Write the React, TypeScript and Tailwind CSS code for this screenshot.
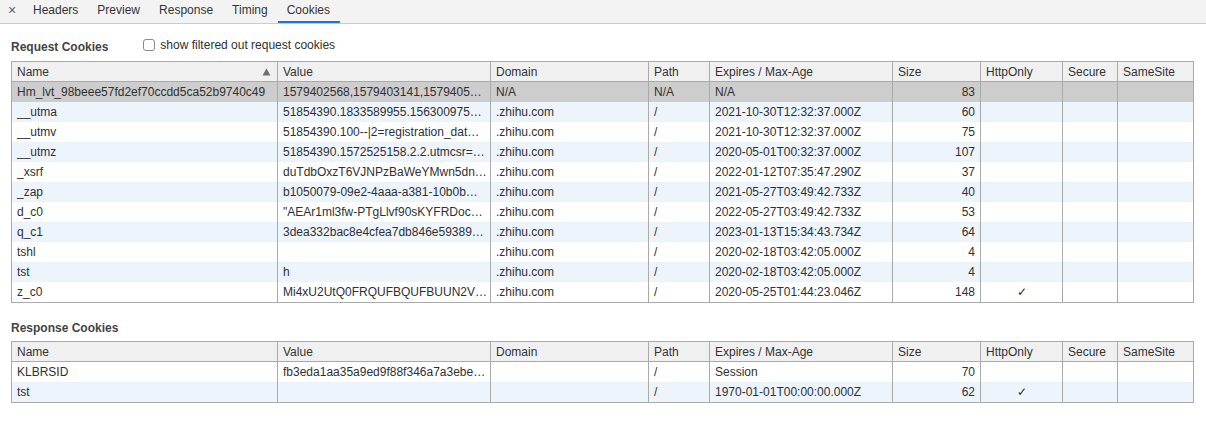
import React from 'react';

const cols = 'grid grid-cols-[265px_213px_158px_61px_183px_88px_82px_55px_76px]';

const headers = ['Name', 'Value', 'Domain', 'Path', 'Expires / Max-Age', 'Size', 'HttpOnly', 'Secure', 'SameSite'];

type Cookie = {
    name: string;
    value: string;
    domain: string;
    path: string;
    expires: string;
    size: number;
    httpOnly?: boolean;
};

const requestCookies: Cookie[] = [
    { name: 'Hm_lvt_98beee57fd2ef70ccdd5ca52b9740c49', value: '1579402568,1579403141,1579405…', domain: 'N/A', path: 'N/A', expires: 'N/A', size: 83 },
    { name: '__utma', value: '51854390.1833589955.156300975…', domain: '.zhihu.com', path: '/', expires: '2021-10-30T12:32:37.000Z', size: 60 },
    { name: '__utmv', value: '51854390.100--|2=registration_dat…', domain: '.zhihu.com', path: '/', expires: '2021-10-30T12:32:37.000Z', size: 75 },
    { name: '__utmz', value: '51854390.1572525158.2.2.utmcsr=…', domain: '.zhihu.com', path: '/', expires: '2020-05-01T00:32:37.000Z', size: 107 },
    { name: '_xsrf', value: 'duTdbOxzT6VJNPzBaWeYMwn5dn…', domain: '.zhihu.com', path: '/', expires: '2022-01-12T07:35:47.290Z', size: 37 },
    { name: '_zap', value: 'b1050079-09e2-4aaa-a381-10b0b…', domain: '.zhihu.com', path: '/', expires: '2021-05-27T03:49:42.733Z', size: 40 },
    { name: 'd_c0', value: '"AEAr1ml3fw-PTgLlvf90sKYFRDoc…', domain: '.zhihu.com', path: '/', expires: '2022-05-27T03:49:42.733Z', size: 53 },
    { name: 'q_c1', value: '3dea332bac8e4cfea7db846e59389…', domain: '.zhihu.com', path: '/', expires: '2023-01-13T15:34:43.734Z', size: 64 },
    { name: 'tshl', value: '', domain: '.zhihu.com', path: '/', expires: '2020-02-18T03:42:05.000Z', size: 4 },
    { name: 'tst', value: 'h', domain: '.zhihu.com', path: '/', expires: '2020-02-18T03:42:05.000Z', size: 4 },
    { name: 'z_c0', value: 'Mi4xU2UtQ0FRQUFBQUFBUUN2V…', domain: '.zhihu.com', path: '/', expires: '2020-05-25T01:44:23.046Z', size: 148, httpOnly: true },
];

const responseCookies: Cookie[] = [
    { name: 'KLBRSID', value: 'fb3eda1aa35a9ed9f88f346a7a3ebe…', domain: '', path: '/', expires: 'Session', size: 70 },
    { name: 'tst', value: '', domain: '', path: '/', expires: '1970-01-01T00:00:00.000Z', size: 62, httpOnly: true },
];

const tabs = ['Headers', 'Preview', 'Response', 'Timing', 'Cookies'];

function Cell({ children, className = '' }: { children?: React.ReactNode; className?: string }) {
    return (
        <div className={`px-[5px] overflow-hidden whitespace-nowrap leading-[20px] border-l border-[#aaaaaa] first:border-l-0 ${className}`}>
            {children}
        </div>
    );
}

function CookieTable({ rows, sorted, selectedFirst }: { rows: Cookie[]; sorted?: boolean; selectedFirst?: boolean }) {
    return (
        <div className="w-[1183px] border border-[#aaaaaa]">
            <div className={`${cols} h-[20px] bg-[#f0f0f0] border-b border-[#aaaaaa] text-[#333]`}>
                {headers.map((h, i) => (
                    <Cell key={h} className="flex items-center justify-between leading-[19px]">
                        <span>{h}</span>
                        {sorted && i === 0 && (
                            <svg width="9" height="8" viewBox="0 0 9 8" className="mr-[1px]">
                                <path d="M4.5 0.5 L8.5 7.5 L0.5 7.5 Z" fill="#6e6e6e" />
                            </svg>
                        )}
                    </Cell>
                ))}
            </div>
            {rows.map((r, i) => {
                const bg = selectedFirst && i === 0 ? 'bg-[#cdcdcd]' : i % 2 === 1 ? 'bg-[#eef4fc]' : 'bg-white';
                return (
                    <div key={r.name + i} className={`${cols} h-[20px] ${bg} text-[#303030]`}>
                        <Cell>{r.name}</Cell>
                        <Cell>{r.value}</Cell>
                        <Cell>{r.domain}</Cell>
                        <Cell>{r.path}</Cell>
                        <Cell>{r.expires}</Cell>
                        <Cell className="text-right">{r.size}</Cell>
                        <Cell className="text-center">{r.httpOnly ? '✓' : ''}</Cell>
                        <Cell />
                        <Cell />
                    </div>
                );
            })}
        </div>
    );
}

export default function App() {
    return (
        <div className="w-[1206px] h-[435px] bg-white text-[12px] font-['Liberation_Sans',Arial,sans-serif] overflow-hidden">
            {/* Tab strip */}
            <div className="h-[24px] bg-[#f3f3f3] border-b border-[#cccccc] flex items-stretch pl-[4px]">
                <div className="w-[16px] flex items-center justify-center text-[#5f5f5f] text-[14px] pb-[2px] mr-[4px]">×</div>
                {tabs.map((t) => (
                    <div
                        key={t}
                        className={`pl-[9px] pr-[10px] flex items-start pt-[1px] text-[#333] border-b-2 ${t === 'Cookies' ? 'border-[#1a73e8]' : 'border-transparent'}`}
                    >
                        {t}
                    </div>
                ))}
            </div>

            <div className="px-[11px]">
                <div className="flex items-center h-[16px] mt-[15px] mb-[6px]">
                    <span className="font-bold text-[#444]">Request Cookies</span>
                    <label className="flex items-center ml-[35px] text-[#303030] -mt-[4px]">
                        <span className="w-[12px] h-[12px] border border-[#8a8a8a] rounded-[3px] bg-white mr-[5px]" />
                        show filtered out request cookies
                    </label>
                </div>
                <CookieTable rows={requestCookies} sorted selectedFirst />

                <div className="h-[16px] mt-[17px] mb-[5px] flex items-center">
                    <span className="font-bold text-[#444]">Response Cookies</span>
                </div>
                <CookieTable rows={responseCookies} />
            </div>
        </div>
    );
}
